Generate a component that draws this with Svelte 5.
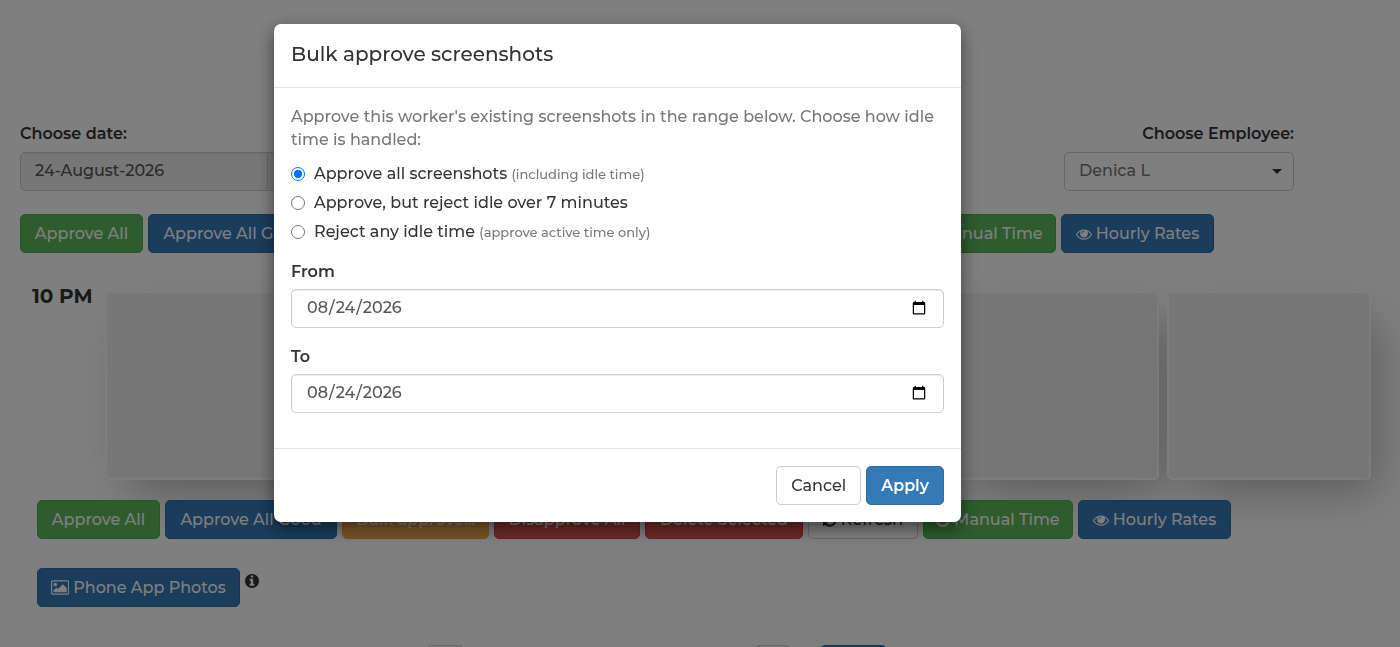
<script lang="ts">
    type Action = { label: string, kind: string, icon?: string }

    const actions : Action[] = [
        { label: 'Approve All', kind: 'success' },
        { label: 'Approve All Good', kind: 'primary' },
        { label: 'Bulk approve...', kind: 'warning' },
        { label: 'Disapprove All', kind: 'danger' },
        { label: 'Delete Selected', kind: 'danger' },
        { label: 'Refresh', kind: 'default', icon: 'refresh' },
        { label: 'Manual Time', kind: 'success', icon: 'clock' },
        { label: 'Hourly Rates', kind: 'primary', icon: 'eye' }
    ]

    const idleOptions = [
        { value: 'all', label: 'Approve all screenshots', hint: '(including idle time)' },
        { value: 'over', label: 'Approve, but reject idle over 7 minutes', hint: '' },
        { value: 'none', label: 'Reject any idle time', hint: '(approve active time only)' }
    ]

    const icons : Record<string, { box: string, d: string }> = {
        eye: {
            box: '0 0 1792 1792',
            d: 'M1664 960q-152-236-381-353 61 104 61 225 0 185-131.5 316.5t-316.5 131.5-316.5-131.5-131.5-316.5q0-121 61-225-229 117-381 353 133 205 333.5 326.5t434.5 121.5 434.5-121.5 333.5-326.5zm-720-384q0-20-14-34t-34-14q-125 0-214.5 89.5t-89.5 214.5q0 20 14 34t34 14 34-14 14-34q0-86 61-147t147-61q20 0 34-14t14-34zm848 384q0 34-20 69-140 230-376.5 368.5t-499.5 138.5-499.5-139-376.5-368q-20-35-20-69t20-69q140-229 376.5-368t499.5-139 499.5 139 376.5 368q20 35 20 69z'
        },
        clock: {
            box: '128 0 1536 1792',
            d: 'M1024 544v448q0 14-9 23t-23 9h-320q-14 0-23-9t-9-23v-64q0-14 9-23t23-9h224v-352q0-14 9-23t23-9h64q14 0 23 9t9 23zm416 352q0-148-73-273t-198-198-273-73-273 73-198 198-73 273 73 273 198 198 273 73 273-73 198-198 73-273zm224 0q0 209-103 385.5t-279.5 279.5-385.5 103-385.5-103-279.5-279.5-103-385.5 103-385.5 279.5-279.5 385.5-103 385.5 103 279.5 279.5 103 385.5z'
        },
        refresh: {
            box: '128 0 1536 1792',
            d: 'M1639 1056q0 5-1 7-64 268-268 434.5t-478 166.5q-146 0-282.5-55t-243.5-157l-129 129q-19 19-45 19t-45-19-19-45v-448q0-26 19-45t45-19h448q26 0 45 19t19 45-19 45l-137 137q71 66 161 102t187 36q134 0 250-65t186-179q11-17 53-117 8-23 30-23h192q13 0 22.5 9.5t9.5 22.5zm25-800v448q0 26-19 45t-45 19h-448q-26 0-45-19t-19-45 19-45l138-138q-148-137-349-137-134 0-250 65t-186 179q-11 17-53 117-8 23-30 23h-199q-13 0-22.5-9.5t-9.5-22.5v-7q65-268 270-434.5t480-166.5q146 0 284 55.5t245 156.5l130-129q19-19 45-19t45 19 19 45z'
        },
        picture: {
            box: '64 0 1920 1792',
            d: 'M704 576q0 80-56 136t-136 56-136-56-56-136 56-136 136-56 136 56 56 136zm1024 384v448h-1408v-192l320-320 160 160 512-512zm96-704h-1600q-13 0-22.5 9.5t-9.5 22.5v1216q0 13 9.5 22.5t22.5 9.5h1600q13 0 22.5-9.5t9.5-22.5v-1216q0-13-9.5-22.5t-22.5-9.5zm160 32v1216q0 66-47 113t-113 47h-1600q-66 0-113-47t-47-113v-1216q0-66 47-113t113-47h1600q66 0 113 47t47 113z'
        },
        info: {
            box: '128 128 1536 1536',
            d: 'M1152 1376v-160q0-14-9-23t-23-9h-96v-512q0-14-9-23t-23-9h-320q-14 0-23 9t-9 23v160q0 14 9 23t23 9h96v320h-96q-14 0-23 9t-9 23v160q0 14 9 23t23 9h448q14 0 23-9t9-23zm-128-896v-160q0-14-9-23t-23-9h-192q-14 0-23 9t-9 23v160q0 14 9 23t23 9h192q14 0 23-9t9-23zm640 416q0 209-103 385.5t-279.5 279.5-385.5 103-385.5-103-279.5-279.5-103-385.5 103-385.5 279.5-279.5 385.5-103 385.5 103 279.5 279.5 103 385.5z'
        }
    }

    let idle = $state('all')
    let from = $state('2026-08-24')
    let to = $state('2026-08-24')
    let open = $state(true)
</script>

{#snippet icon(name : string)}
    <svg class="icon {name}" viewBox={icons[name].box} aria-hidden="true"><path d={icons[name].d} /></svg>
{/snippet}

{#snippet toolbar()}
    <div class="toolbar">
        {#each actions as action}
            <button type="button" class="btn {action.kind}">
                {#if action.icon}{@render icon(action.icon)}{/if}
                {action.label}
            </button>
        {/each}
    </div>
{/snippet}

<div class="page">
    <div class="filters">
        <div class="field">
            <label for="day">Choose date:</label>
            <div class="input-group">
                <input id="day" class="control" type="text" value="24-August-2026" readonly>
                <span class="addon"></span>
            </div>
        </div>
        <div class="field employee">
            <label for="employee">Choose Employee:</label>
            <div class="select">
                <select id="employee" class="control">
                    <option>Denica L</option>
                </select>
            </div>
        </div>
    </div>

    {@render toolbar()}

    <div class="hour">
        <h2>10 PM</h2>
        <div class="shots">
            {#each Array(6) as _}
                <div class="shot"></div>
            {/each}
        </div>
    </div>

    <div class="bottom">
        {@render toolbar()}
        <div class="photos">
            <button type="button" class="btn primary">{@render icon('picture')} Phone App Photos</button>
            {@render icon('info')}
        </div>
    </div>

    <div class="pager">
        <button type="button" class="btn default" aria-label="Previous"></button>
        <button type="button" class="btn default" aria-label="Next"></button>
        <button type="button" class="btn primary" aria-label="Go"></button>
    </div>
</div>

{#if open}
    <div class="backdrop">
        <div class="modal" role="dialog" aria-modal="true" aria-labelledby="modal-title">
            <div class="modal-header">
                <h4 id="modal-title">Bulk approve screenshots</h4>
            </div>
            <div class="modal-body">
                <p>Approve this worker's existing screenshots in the range below. Choose how idle time is handled:</p>
                <div class="options">
                    {#each idleOptions as option}
                        <label class="radio">
                            <input type="radio" name="idle" value={option.value} bind:group={idle}>
                            <span>{option.label} {#if option.hint}<small>{option.hint}</small>{/if}</span>
                        </label>
                    {/each}
                </div>
                <div class="form-group">
                    <label for="from">From</label>
                    <input id="from" class="control" type="date" bind:value={from}>
                </div>
                <div class="form-group">
                    <label for="to">To</label>
                    <input id="to" class="control" type="date" bind:value={to}>
                </div>
            </div>
            <div class="modal-footer">
                <button type="button" class="btn default" onclick={() => open = false}>Cancel</button>
                <button type="button" class="btn primary apply" onclick={() => open = false}>Apply</button>
            </div>
        </div>
    </div>
{/if}

<style>
    :global(body) {
        background: #fff;
        color: #333;
        font-family: Montserrat, Inter, "Open Sans", sans-serif;
        font-size: 16px;
        font-weight: 500;
        line-height: 23px;
    }
    * {
        box-sizing: border-box;
    }
    h2, h4, p {
        margin: 0;
    }
    .page {
        height: 100vh;
        overflow: hidden;
        padding-top: 122px;
    }
    label {
        font-weight: 600;
    }

    /* form controls */
    .control {
        display: block;
        width: 100%;
        height: 39px;
        padding: 6px 14px 8px;
        border: 1px solid #ccc;
        border-radius: 5px;
        background: #fff;
        box-shadow: inset 0 1px 1px rgba(0, 0, 0, 0.075);
        color: #555;
        font: inherit;
    }
    .control[readonly] {
        background: #eee;
    }
    .filters {
        display: flex;
        justify-content: space-between;
        padding: 0 106px 0 20px;
    }
    .field {
        display: grid;
        gap: 7px;
    }
    .employee {
        width: 230px;
    }
    .employee label {
        text-align: right;
    }
    .input-group {
        display: flex;
    }
    .input-group .control {
        width: 248px;
        border-radius: 5px 0 0 5px;
    }
    .addon {
        width: 45px;
        border: 1px solid #ccc;
        border-left: 0;
        border-radius: 0 5px 5px 0;
        background: #eee;
    }
    .select {
        position: relative;
    }
    .select::after {
        content: '';
        position: absolute;
        top: 17px;
        right: 12px;
        border: 5px solid transparent;
        border-top-color: #333;
        border-bottom: 0;
        pointer-events: none;
    }
    .select .control {
        appearance: none;
        box-shadow: none;
        color: #777;
    }

    /* buttons */
    .btn {
        display: inline-flex;
        align-items: center;
        justify-content: center;
        gap: 4px;
        height: 39px;
        padding: 0 14px;
        border: 1px solid transparent;
        border-radius: 5px;
        color: #fff;
        font: inherit;
        white-space: nowrap;
    }
    .success {
        background: #5cb85c;
        border-color: #4cae4c;
    }
    .primary {
        background: #337ab7;
        border-color: #2e6da4;
    }
    .warning {
        background: #f0ad4e;
        border-color: #eea236;
    }
    .danger {
        background: #d9534f;
        border-color: #d43f3a;
    }
    .default {
        background: #fff;
        border-color: #ccc;
        color: #333;
    }
    .icon {
        flex: none;
        height: 16px;
        fill: currentColor;
    }
    .toolbar {
        display: grid;
        grid-template-columns: 123px 172px 147px 146px 158px 110px 150px 153px;
        gap: 5px;
    }
    .toolbar .btn {
        padding: 0;
    }
    .page > .toolbar {
        padding: 23px 0 0 20px;
    }

    /* screenshots of one hour */
    .hour {
        display: flex;
        gap: 11px;
        padding: 32px 29px 0 32px;
    }
    .hour h2 {
        flex: none;
        width: 62px;
        font-size: 20px;
        font-weight: 700;
        line-height: 23px;
        white-space: nowrap;
    }
    .shots {
        flex: 1;
        display: grid;
        grid-template-columns: repeat(6, 1fr);
        gap: 8px;
        padding-top: 6px;
    }
    .shot {
        height: 189px;
        border: 2px solid #fbfbfb;
        border-radius: 5px;
        background: #eee;
        box-shadow: 14px 20px 46px -10px rgba(0, 0, 0, 0.3);
    }
    .bottom {
        display: grid;
        gap: 29px;
        padding: 20px 0 0 37px;
    }
    .photos {
        display: flex;
        gap: 5px;
    }
    .photos .btn {
        padding: 0 13px;
    }
    .icon.picture {
        height: 17px;
    }
    .icon.info {
        height: 14px;
        margin-top: 6px;
    }
    .pager {
        display: flex;
        padding: 38px 0 0 427px;
    }
    .pager .btn {
        width: 37px;
        margin-right: 290px;
    }
    .pager .btn + .btn {
        margin-right: 29px;
    }
    .pager .primary {
        width: 67px;
    }

    /* modal */
    .backdrop {
        position: fixed;
        inset: 0;
        padding: 24px 165px 24px 0;
        background: rgba(0, 0, 0, 0.5);
    }
    .modal {
        max-width: 687px;
        margin: 0 auto;
        border-radius: 7px;
        background: #fff;
        box-shadow: 0 6px 17px rgba(0, 0, 0, 0.5);
    }
    .modal-header {
        padding: 16px 17px 18px;
        border-bottom: 1px solid #e5e5e5;
    }
    .modal-header h4 {
        font-size: 20px;
        font-weight: 500;
        line-height: 29px;
    }
    .modal-body {
        padding: 17px 17px 18px;
    }
    .modal-body p {
        color: #777;
    }
    .options {
        display: grid;
        gap: 6px;
        margin: 11px 0 17px;
    }
    .radio {
        display: flex;
        align-items: center;
        gap: 9px;
        font-weight: 500;
    }
    .radio input {
        width: 14px;
        height: 14px;
        margin: 0;
    }
    .radio small {
        color: #777;
        font-size: 13px;
        line-height: 1;
    }
    .form-group {
        display: grid;
        gap: 6px;
        margin-bottom: 17px;
    }
    .modal-footer {
        display: flex;
        justify-content: flex-end;
        gap: 5px;
        padding: 17px;
        border-top: 1px solid #e5e5e5;
    }
    .modal-footer .apply {
        font-weight: 600;
    }
</style>
